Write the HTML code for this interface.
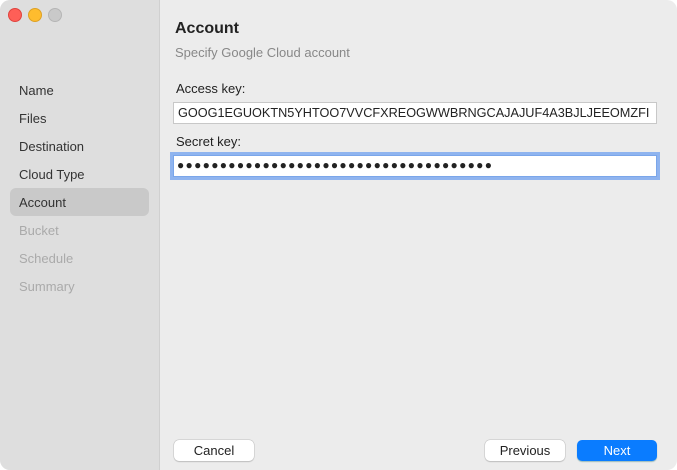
<!DOCTYPE html>
<html><head><style>
body{margin:0;width:677px;height:470px;background:#fff;font-family:"Liberation Sans",sans-serif;overflow:hidden}
.win{position:absolute;left:0;top:0;width:677px;height:470px;border-radius:10px;overflow:hidden;background:#ececec}
.side{position:absolute;left:0;top:0;width:159px;height:470px;background:#dedede;border-right:1px solid #d0d0d0}
.dot{position:absolute;top:8px;width:12px;height:12px;border-radius:50%}
.item{position:absolute;left:10px;width:139px;height:28px;line-height:28px;padding-left:9px;box-sizing:border-box;font-size:13px;color:#333}
.dis{color:#aaa}
.sel{background:#c9c9c9;border-radius:6px}
.t{position:absolute;font-size:13px;color:#222}
.field{position:absolute;left:173px;width:484px;height:22px;background:#fff;border:1px solid #c8c8c8;box-sizing:border-box;font-size:12.7px;line-height:21px;padding-left:4px;color:#222;white-space:nowrap;overflow:hidden}
.btn{position:absolute;top:440px;height:21px;background:#fff;border-radius:5px;box-shadow:0 0 0 0.5px #c0c0c0,0 1px 1px #bbb;font-size:13px;line-height:21px;text-align:center;color:#222}
</style></head><body><div class="win">
<div class="side">
<div class="dot" style="left:8px;background:#fe5f57;border:0.5px solid #e0443e"></div>
<div class="dot" style="left:28px;background:#febc2e;border:0.5px solid #dea123"></div>
<div class="dot" style="left:48px;background:#c9c9c9;border:0.5px solid #b5b5b5"></div>
<div class="item" style="top:77px">Name</div>
<div class="item" style="top:105px">Files</div>
<div class="item" style="top:133px">Destination</div>
<div class="item" style="top:161px">Cloud Type</div>
<div class="item sel" style="top:188px;line-height:30px">Account</div>
<div class="item dis" style="top:217px">Bucket</div>
<div class="item dis" style="top:245px">Schedule</div>
<div class="item dis" style="top:273px">Summary</div>
</div>
<div class="t" style="left:175px;top:20px;font-size:16px;font-weight:bold;color:#222">Account</div>
<div class="t" style="left:175px;top:45px;color:#888">Specify Google Cloud account</div>
<div class="t" style="left:176px;top:81px">Access key:</div>
<div class="field" style="top:102px">GOOG1EGUOKTN5YHTOO7VVCFXREOGWWBRNGCAJAJUF4A3BJLJEEOMZFI</div>
<div class="t" style="left:176px;top:134px">Secret key:</div>
<div class="field" style="top:155px;box-shadow:0 0 0 3px #8fb4ef;border-color:#7aa6ea;font-size:12px;letter-spacing:1.3px;line-height:19px;padding-left:3px">●●●●●●●●●●●●●●●●●●●●●●●●●●●●●●●●●●●●●</div>
<div class="btn" style="left:174px;width:80px">Cancel</div>
<div class="btn" style="left:485px;width:80px">Previous</div>
<div class="btn" style="left:577px;width:80px;background:#0a7cff;color:#fff;box-shadow:0 1px 1px #9bb">Next</div>
</div></body></html>
